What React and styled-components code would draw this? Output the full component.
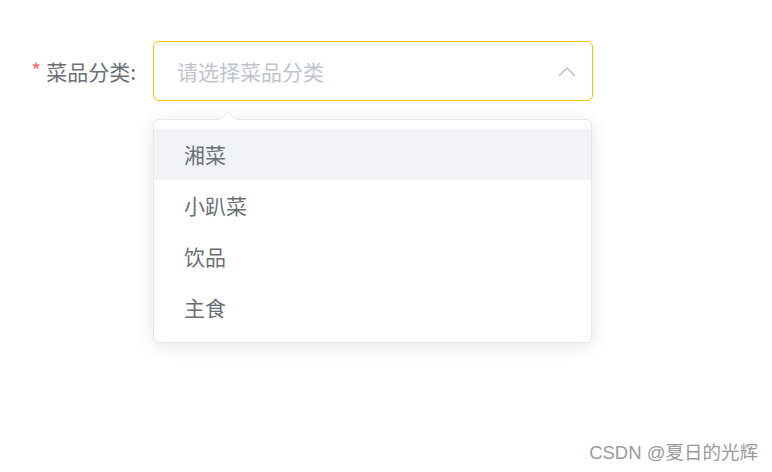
import styled, { createGlobalStyle } from "styled-components";

const GlobalStyle = createGlobalStyle`
  html, body {
    margin: 0;
    padding: 0;
    background: #ffffff;
  }
  body {
    font-family: "Noto Sans CJK SC", "Liberation Sans", sans-serif;
    width: 772px;
    height: 472px;
    overflow: hidden;
  }
`;

const Page = styled.div`
  position: relative;
  width: 772px;
  height: 472px;
  padding-top: 41px;
  box-sizing: border-box;
`;

const FormItem = styled.div`
  display: flex;
  align-items: flex-start;
`;

const Label = styled.label`
  width: 136px;
  height: 60px;
  padding-right: 17px;
  display: flex;
  align-items: center;
  justify-content: flex-end;
  font-size: 21px;
  color: #6c6f76;
`;

const Star = styled.span`
  color: #f56c6c;
  margin-right: 5px;
  font-size: 21px;
  position: relative;
  top: -1px;
`;

const SelectWrap = styled.div`
  position: relative;
  width: 440px;
`;

const Input = styled.div`
  height: 60px;
  box-sizing: border-box;
  border: 1px solid #f5c400;
  border-radius: 6px;
  display: flex;
  align-items: center;
  justify-content: space-between;
  padding: 0 16px 0 23px;
`;

const Placeholder = styled.span`
  font-size: 21px;
  color: #c0c4cc;
`;

const Dropdown = styled.div`
  position: absolute;
  top: 78px;
  left: 0;
  width: 439px;
  box-sizing: border-box;
  background: #ffffff;
  border: 1px solid #e4e7ed;
  border-radius: 6px;
  box-shadow: 0 3px 18px rgba(0, 0, 0, 0.1);
  padding: 9px 0;
`;

const Arrow = styled.div`
  position: absolute;
  top: -9px;
  left: 65px;
  width: 0;
  height: 0;
  border-left: 9px solid transparent;
  border-right: 9px solid transparent;
  border-bottom: 9px solid #e4e7ed;

  &::after {
    content: "";
    position: absolute;
    top: 1px;
    left: -8px;
    border-left: 8px solid transparent;
    border-right: 8px solid transparent;
    border-bottom: 8px solid #ffffff;
  }
`;

const Option = styled.div`
  height: 51px;
  line-height: 51px;
  padding: 0 30px;
  font-size: 21px;
  color: #6c6f76;
  background: ${(p) => (p.$hover ? "#f2f3f7" : "transparent")};
`;

const Watermark = styled.div`
  position: absolute;
  right: 14px;
  bottom: 8px;
  font-family: "Liberation Sans", "Noto Sans CJK SC", sans-serif;
  font-size: 18.5px;
  color: #9a9a9a;
  text-shadow: 0 0 1px #ffffff;
`;

const options = ["湘菜", "小趴菜", "饮品", "主食"];

export default function App() {
  return (
    <Page>
      <GlobalStyle />
      <FormItem>
        <Label>
          <Star>*</Star>菜品分类:
        </Label>
        <SelectWrap>
          <Input>
            <Placeholder>请选择菜品分类</Placeholder>
            <svg width="18" height="11" viewBox="0 0 18 11" fill="none">
              <path d="M1 10 L9 2 L17 10" stroke="#c0c4cc" strokeWidth="1.6" />
            </svg>
          </Input>
          <Dropdown>
            <Arrow />
            {options.map((o, i) => (
              <Option key={o} $hover={i === 0}>
                {o}
              </Option>
            ))}
          </Dropdown>
        </SelectWrap>
      </FormItem>
      <Watermark>CSDN @夏日的光辉</Watermark>
    </Page>
  );
}
